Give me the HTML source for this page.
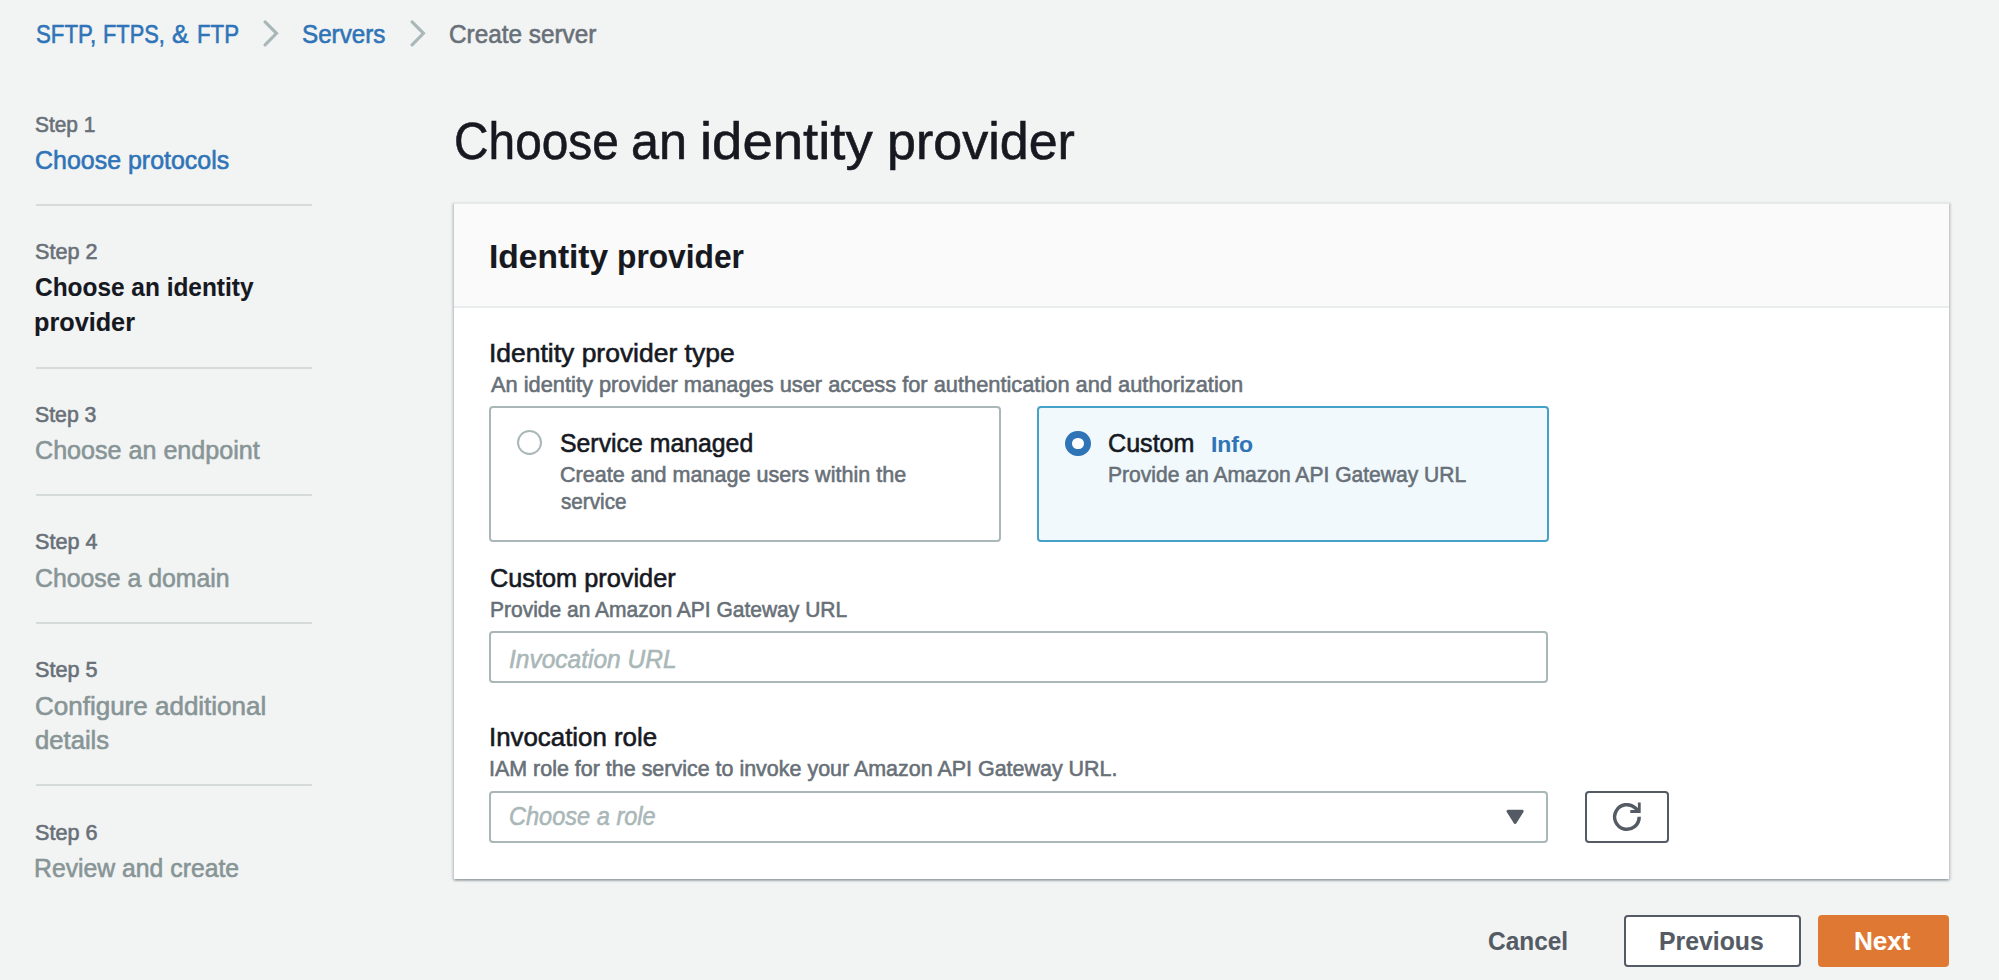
<!DOCTYPE html>
<html><head><meta charset="utf-8"><title>Create server</title>
<style>
html,body{margin:0;padding:0;}
body{width:1999px;height:980px;overflow:hidden;background:#f2f3f3;position:relative;font-family:"Liberation Sans",sans-serif;}
.t{position:absolute;white-space:nowrap;line-height:1;transform-origin:0 0;-webkit-text-stroke:0.6px currentColor;}
.b{position:absolute;}
</style></head><body>
<svg class="b" style="left:262px;top:20px" width="18" height="28" viewBox="0 0 18 28"><path d="M3.1 1.9 L14.5 13.3 L3.1 24.9" fill="none" stroke="#aab7b8" stroke-width="3.1" stroke-linecap="round"/></svg>
<svg class="b" style="left:409px;top:20px" width="18" height="28" viewBox="0 0 18 28"><path d="M3.1 1.9 L14.5 13.3 L3.1 24.9" fill="none" stroke="#aab7b8" stroke-width="3.1" stroke-linecap="round"/></svg>
<div class="b" style="left:36px;top:204px;width:276.00px;height:2.00px;background:#d5dbdb"></div>
<div class="b" style="left:36px;top:367px;width:276.00px;height:2.00px;background:#d5dbdb"></div>
<div class="b" style="left:36px;top:494px;width:276.00px;height:2.00px;background:#d5dbdb"></div>
<div class="b" style="left:36px;top:622px;width:276.00px;height:2.00px;background:#d5dbdb"></div>
<div class="b" style="left:36px;top:784px;width:276.00px;height:2.00px;background:#d5dbdb"></div>
<div class="b" style="left:454px;top:202px;width:1495.00px;height:677.00px;background:#fff;box-shadow:0 2px 2px 0 rgba(0,28,36,.24),2px 1px 2px 0 rgba(0,28,36,.12),-2px 1px 2px 0 rgba(0,28,36,.12);border-top:2px solid #e6e9e9;box-sizing:border-box"></div>
<div class="b" style="left:454px;top:204px;width:1495.00px;height:104.00px;background:#fafafa;border-bottom:2px solid #eaeded;box-sizing:border-box"></div>
<div class="b" style="left:489px;top:406px;width:512.00px;height:136.00px;border:2px solid #aab7b8;border-radius:4px;box-sizing:border-box;background:#fff"></div>
<div class="b" style="left:517.3px;top:430.4px;width:25.00px;height:25.00px;border:2px solid #aab7b8;border-radius:50%;box-sizing:border-box"></div>
<div class="b" style="left:1037px;top:406px;width:511.50px;height:136.00px;border:2px solid #44a1c8;border-radius:4px;box-sizing:border-box;background:#f1f9fd"></div>
<div class="b" style="left:1065px;top:430.5px;width:25.50px;height:25.50px;border:7.5px solid #2f74b7;border-radius:50%;box-sizing:border-box;background:#fff"></div>
<div class="b" style="left:489.2px;top:631px;width:1059.30px;height:52.00px;border:2px solid #aab7b8;border-radius:4px;box-sizing:border-box;background:#fff"></div>
<div class="b" style="left:489.2px;top:790.5px;width:1059.30px;height:52.50px;border:2px solid #aab7b8;border-radius:4px;box-sizing:border-box;background:#fff"></div>
<svg class="b" style="left:1500px;top:805px" width="30" height="24" viewBox="1500 805 30 24"><path d="M1508 811.3 L1522.2 811.3 L1515.1 822.4 Z" fill="#545b64" stroke="#545b64" stroke-width="3" stroke-linejoin="round"/></svg>
<div class="b" style="left:1584.5px;top:790.5px;width:84.50px;height:52.50px;border:2px solid #545b64;border-radius:4px;box-sizing:border-box;background:#fff"></div>
<svg class="b" style="left:1600px;top:795px" width="50" height="45" viewBox="1600 795 50 45"><path d="M1639.2 816.8 A12.3 12.3 0 1 1 1635.4 808.1 L1637.5 810.2" fill="none" stroke="#545b64" stroke-width="3.5"/><path d="M1630.3 811.5 H1639.3 V802.6" fill="none" stroke="#545b64" stroke-width="2.8"/></svg>
<div class="b" style="left:1623.5px;top:914.5px;width:177.00px;height:52.50px;border:2px solid #545b64;border-radius:4px;box-sizing:border-box;background:#fff"></div>
<div class="b" style="left:1818px;top:914.5px;width:131.00px;height:52.50px;background:#df7833;border-radius:4px"></div>
<div class="t" id="bc1a" style="left:35.52px;top:20.60px;font-size:26px;color:#2f74b7;transform:scaleX(0.8568);">SFTP,</div>
<div class="t" id="bc1b" style="left:102.96px;top:20.60px;font-size:26px;color:#2f74b7;transform:scaleX(0.8388);">FTPS,</div>
<div class="t" id="bc1c" style="left:171.89px;top:20.60px;font-size:26px;color:#2f74b7;transform:scaleX(0.9510);">&amp;</div>
<div class="t" id="bc1d" style="left:196.90px;top:20.60px;font-size:26px;color:#2f74b7;transform:scaleX(0.8564);">FTP</div>
<div class="t" id="bc2" style="left:302.33px;top:20.61px;font-size:26px;color:#2f74b7;transform:scaleX(0.9313);">Servers</div>
<div class="t" id="bc3" style="left:449.05px;top:20.61px;font-size:26px;color:#687078;transform:scaleX(0.9359);">Create server</div>
<div class="t" id="s1" style="left:34.90px;top:113.51px;font-size:22.3px;color:#687078;transform:scaleX(0.9372);">Step 1</div>
<div class="t" id="n1" style="left:35.00px;top:146.71px;font-size:26px;color:#2f74b7;transform:scaleX(0.9600);">Choose protocols</div>
<div class="t" id="s2" style="left:35.02px;top:240.81px;font-size:22.3px;color:#687078;transform:scaleX(0.9683);">Step 2</div>
<div class="t" id="n2a" style="left:35.00px;top:274.11px;font-size:26px;color:#16191f;font-weight:bold;-webkit-text-stroke-width:0.1px;transform:scaleX(0.9394);">Choose an identity</div>
<div class="t" id="n2b" style="left:33.97px;top:309.01px;font-size:26px;color:#16191f;font-weight:bold;-webkit-text-stroke-width:0.1px;transform:scaleX(0.9705);">provider</div>
<div class="t" id="s3" style="left:34.90px;top:403.80px;font-size:22.3px;color:#687078;transform:scaleX(0.9530);">Step 3</div>
<div class="t" id="n3" style="left:35.02px;top:437.01px;font-size:26px;color:#879596;transform:scaleX(0.9655);">Choose an endpoint</div>
<div class="t" id="s4" style="left:35.02px;top:531.31px;font-size:22.3px;color:#687078;transform:scaleX(0.9683);">Step 4</div>
<div class="t" id="n4" style="left:35.00px;top:564.81px;font-size:26px;color:#879596;transform:scaleX(0.9552);">Choose a domain</div>
<div class="t" id="s5" style="left:34.94px;top:659.31px;font-size:22.3px;color:#687078;transform:scaleX(0.9688);">Step 5</div>
<div class="t" id="n5a" style="left:35.00px;top:692.51px;font-size:26px;color:#879596;">Configure additional</div>
<div class="t" id="n5b" style="left:35.01px;top:727.01px;font-size:26px;color:#879596;transform:scaleX(0.9865);">details</div>
<div class="t" id="s6" style="left:35.00px;top:822.01px;font-size:22.3px;color:#687078;transform:scaleX(0.9689);">Step 6</div>
<div class="t" id="n6" style="left:34.08px;top:854.91px;font-size:26px;color:#879596;transform:scaleX(0.9523);">Review and create</div>
<div class="t" id="h1a" style="left:454.07px;top:114.81px;font-size:52px;color:#16191f;transform:scaleX(0.9198);">Choose</div>
<div class="t" id="h1b" style="left:630.69px;top:114.81px;font-size:52px;color:#16191f;transform:scaleX(0.9691);">an</div>
<div class="t" id="h1c" style="left:700.27px;top:114.81px;font-size:52px;color:#16191f;transform:scaleX(1.0479);">identity</div>
<div class="t" id="h1d" style="left:887.00px;top:114.81px;font-size:52px;color:#16191f;">provider</div>
<div class="t" id="h2a" style="left:489.39px;top:239.51px;font-size:33.4px;color:#16191f;font-weight:bold;-webkit-text-stroke-width:0.1px;transform:scaleX(1.0037);">Identity</div>
<div class="t" id="h2b" style="left:617.09px;top:239.51px;font-size:33.4px;color:#16191f;font-weight:bold;-webkit-text-stroke-width:0.1px;transform:scaleX(0.9502);">provider</div>
<div class="t" id="ipt" style="left:488.71px;top:339.51px;font-size:26px;color:#16191f;transform:scaleX(1.0176);">Identity provider type</div>
<div class="t" id="iptd" style="left:490.71px;top:373.60px;font-size:22.3px;color:#687078;transform:scaleX(0.9786);">An identity provider manages user access for authentication and authorization</div>
<div class="t" id="svc" style="left:559.99px;top:430.01px;font-size:26px;color:#16191f;transform:scaleX(0.9550);">Service managed</div>
<div class="t" id="svcd1" style="left:560.02px;top:463.71px;font-size:22.3px;color:#687078;transform:scaleX(0.9663);">Create and manage users within the</div>
<div class="t" id="svcd2" style="left:561.05px;top:490.60px;font-size:22.3px;color:#687078;transform:scaleX(0.9277);">service</div>
<div class="t" id="cus" style="left:1107.64px;top:430.01px;font-size:26px;color:#16191f;transform:scaleX(0.9656);">Custom</div>
<div class="t" id="info" style="left:1211.11px;top:434.01px;font-size:22.3px;color:#2f74b7;font-weight:bold;-webkit-text-stroke-width:0.1px;transform:scaleX(1.0276);">Info</div>
<div class="t" id="cusd" style="left:1107.60px;top:463.71px;font-size:22.3px;color:#687078;transform:scaleX(0.9446);">Provide an Amazon API Gateway URL</div>
<div class="t" id="cp" style="left:489.58px;top:564.91px;font-size:26px;color:#16191f;transform:scaleX(0.9735);">Custom provider</div>
<div class="t" id="cpd" style="left:489.59px;top:598.90px;font-size:22.3px;color:#687078;transform:scaleX(0.9417);">Provide an Amazon API Gateway URL</div>
<div class="t" id="url" style="left:509.05px;top:645.91px;font-size:26px;color:#aab7b8;font-style:italic;transform:scaleX(0.9429);">Invocation URL</div>
<div class="t" id="ir" style="left:488.97px;top:723.71px;font-size:26px;color:#16191f;transform:scaleX(0.9940);">Invocation role</div>
<div class="t" id="ird" style="left:489.04px;top:757.90px;font-size:22.3px;color:#687078;transform:scaleX(0.9623);">IAM role for the service to invoke your Amazon API Gateway URL.</div>
<div class="t" id="role" style="left:509.00px;top:803.41px;font-size:26px;color:#aab7b8;font-style:italic;transform:scaleX(0.9060);">Choose a role</div>
<div class="t" id="cancel" style="left:1488.45px;top:928.01px;font-size:26px;color:#545b64;font-weight:bold;-webkit-text-stroke-width:0.1px;transform:scaleX(0.9399);">Cancel</div>
<div class="t" id="prev" style="left:1659.05px;top:928.01px;font-size:26px;color:#545b64;font-weight:bold;-webkit-text-stroke-width:0.1px;transform:scaleX(0.9533);">Previous</div>
<div class="t" id="next" style="left:1853.88px;top:928.01px;font-size:26px;color:#ffffff;font-weight:bold;-webkit-text-stroke-width:0.1px;transform:scaleX(1.0023);">Next</div>
</body></html>
